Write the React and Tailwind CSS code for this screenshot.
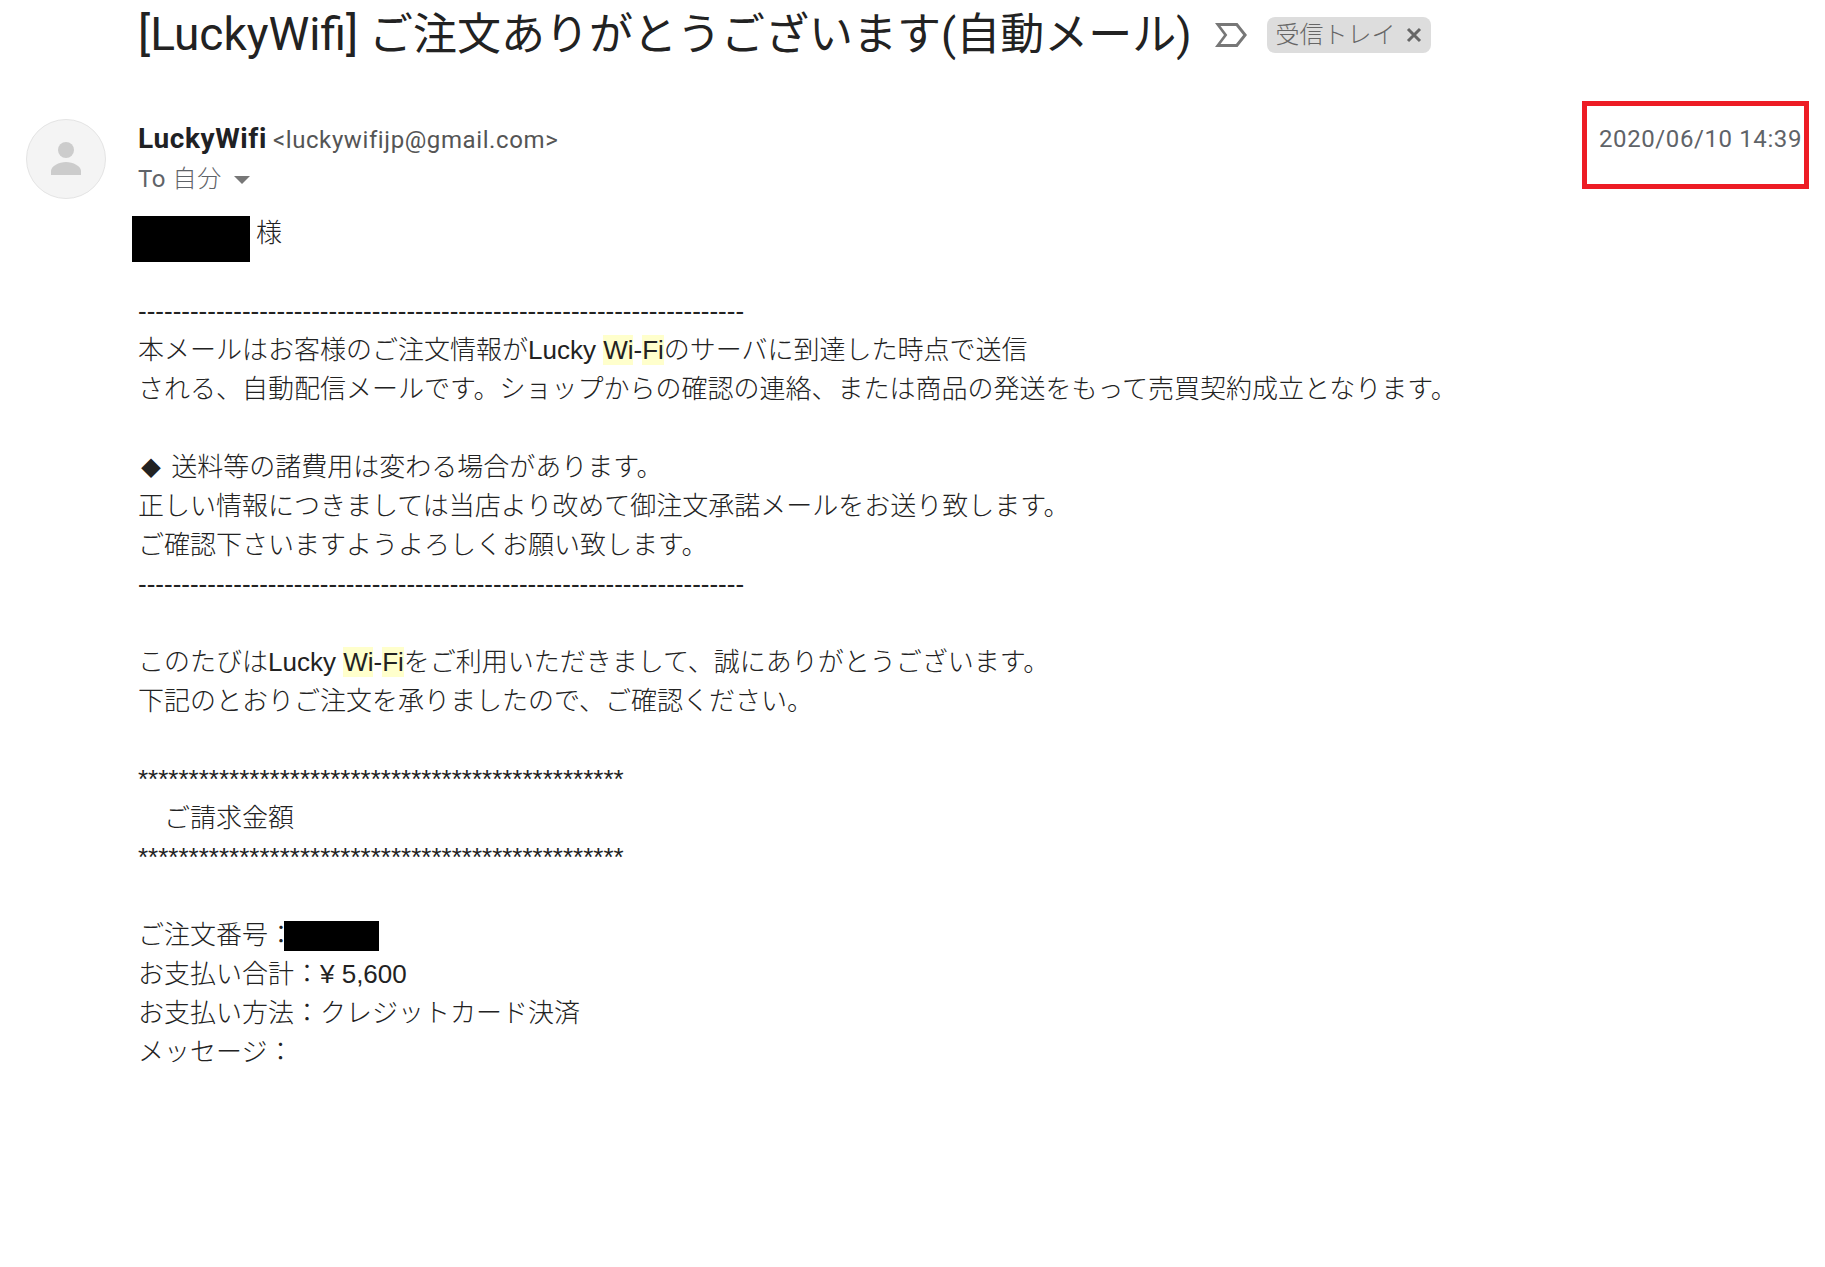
import React from "react";

const DASHES = "-".repeat(70);
const STARS = "*".repeat(48);

const Mark = ({ children }) => (
    <mark className="bg-[#ffffcc] text-inherit">{children}</mark>
);

const WiFi = () => (
    <>
        <Mark>Wi</Mark>-<Mark>Fi</Mark>
    </>
);

const Line = ({ children }) => <p className="min-h-[39px]">{children}</p>;

const Avatar = () => (
    <div className="flex size-20 shrink-0 items-center justify-center rounded-full border border-[#e4e4e4] bg-[#f4f4f4]">
        <svg viewBox="0 0 30 34" className="h-[34px] w-[30px] fill-[#cccccc]" aria-hidden="true">
            <circle cx="15" cy="8" r="8" />
            <path d="M0 33v-4c0-5 8-9 15-9s15 4 15 9v4z" />
        </svg>
    </div>
);

const Subject = () => (
    <div className="flex items-center">
        <h1 className="text-[44px] leading-[68px] font-normal whitespace-nowrap font-[Roboto,'Noto_Sans_CJK_JP',sans-serif]">
            <span className="text-[46px]">[LuckyWifi]</span> ご注文ありがとうございます(自動メール)
        </h1>
        <button type="button" aria-label="重要マーク" className="ml-6 shrink-0">
            <svg viewBox="0 0 32 24" className="h-6 w-8 fill-[#777777]" aria-hidden="true">
                <path fillRule="evenodd" d="M0 0h22.500L32 12l-9.500 12H0l9-12zM5.500 3l6.800 9-6.800 9H21l7.200-9L21 3z" />
            </svg>
        </button>
        <span className="ml-5 flex h-9 shrink-0 items-center gap-2.5 rounded-lg bg-[#dddddd] px-2 text-2xl font-light text-[#666666]">
            受信トレイ
            <button type="button" aria-label="ラベルを削除">
                <svg viewBox="0 0 18 18" className="size-[18px] fill-none stroke-[#666666] stroke-3" aria-hidden="true">
                    <path d="M3 3l12 12M15 3L3 15" />
                </svg>
            </button>
        </span>
    </div>
);

const Sender = () => (
    <div className="font-[Roboto,'Noto_Sans_CJK_JP',sans-serif] text-2xl leading-[39px] tracking-wide text-[#5f6368]">
        <p className="flex items-baseline gap-1.5">
            <span className="text-[28px] font-bold text-[#202124]">LuckyWifi</span>
            <span className="text-[#555555]">&lt;luckywifijp@gmail.com&gt;</span>
        </p>
        <button type="button" className="flex items-center font-light tracking-wide">
            <span className="font-normal">To&nbsp;</span>自分
            <svg viewBox="0 0 16 8" className="ml-3 h-2 w-4 fill-[#777777]" aria-hidden="true">
                <path d="M0 0h16l-8 8z" />
            </svg>
        </button>
    </div>
);

const MailBody = () => (
    <div className="text-[26px] leading-[39px] font-light">
        <p className="flex h-[39px] items-start">
            <span className="mt-0.5 mr-1.5 -ml-1.5 h-[46px] w-[118px] shrink-0 bg-black" />
            様
        </p>
        <Line />
        <Line>{DASHES}</Line>
        <Line>
            本メールはお客様のご注文情報がLucky <WiFi />のサーバに到達した時点で送信
        </Line>
        <Line>
            される、自動配信メールです。ショップからの確認の連絡、または商品の発送をもって売買契約成立となります。
        </Line>
        <Line />
        <Line>
            <span className="inline-block w-[26px] text-center text-xl">◆</span> 送料等の諸費用は変わる場合があります。
        </Line>
        <Line>正しい情報につきましては当店より改めて御注文承諾メールをお送り致します。</Line>
        <Line>ご確認下さいますようよろしくお願い致します。</Line>
        <Line>{DASHES}</Line>
        <Line />
        <Line>
            このたびはLucky <WiFi />をご利用いただきまして、誠にありがとうございます。
        </Line>
        <Line>下記のとおりご注文を承りましたので、ご確認ください。</Line>
        <Line />
        <Line>{STARS}</Line>
        <Line>{"\u3000"}ご請求金額</Line>
        <Line>{STARS}</Line>
        <Line />
        <p className="flex h-[39px] items-center">
            ご注文番号：
            <span className="-ml-2.5 h-[30px] w-[95px] shrink-0 bg-black" />
        </p>
        <Line>お支払い合計：¥ 5,600</Line>
        <Line>お支払い方法：クレジットカード決済</Line>
        <Line>メッセージ：</Line>
    </div>
);

const App = () => (
    <main
        lang="ja"
        className="min-h-screen bg-white pr-4 pl-[26px] font-['Liberation_Sans','Noto_Sans_CJK_JP',sans-serif] text-[#222222]"
    >
        <header className="pl-28">
            <Subject />
        </header>
        <section className="mt-8 flex items-start">
            <div className="mt-[18px] mr-8">
                <Avatar />
            </div>
            <div className="min-w-0 flex-1">
                <div className="flex items-start justify-between">
                    <div className="pt-[18px]">
                        <Sender />
                    </div>
                    <time
                        dateTime="2020-06-10T14:39"
                        className="h-[88px] shrink-0 border-5 border-[#ed1c24] pt-3.5 pr-0.5 pl-3 font-[Roboto,sans-serif] text-2xl leading-[39px] tracking-wide text-[#5f6368]"
                    >
                        2020/06/10 14:39
                    </time>
                </div>
                <div className="mt-[15px]">
                    <MailBody />
                </div>
            </div>
        </section>
    </main>
);

export default App;
